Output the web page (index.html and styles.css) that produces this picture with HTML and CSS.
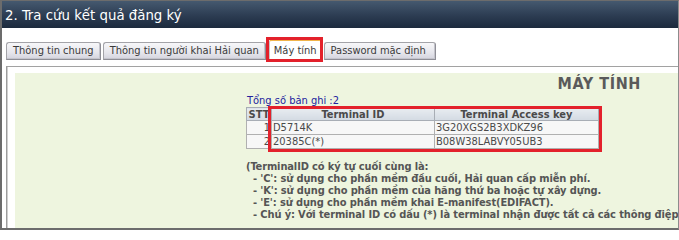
FILE: index.html
```html
<!DOCTYPE html>
<html lang="vi">
<head>
<meta charset="utf-8">
<title>Tra cứu kết quả đăng ký</title>
<link rel="stylesheet" href="styles.css">
</head>
<body>
<div class="window">
  <div class="titlebar">2. Tra cứu kết quả đăng ký</div>
  <div class="body">
    <div class="tabs">
      <div class="tab">Thông tin chung</div>
      <div class="tab">Thông tin người khai Hải quan</div>
      <div class="tab active">Máy tính</div>
      <div class="tab wide">Password mặc định</div>
    </div>
    <div class="panel">
      <div class="content">
        <div class="title">MÁY TÍNH</div>
        <div class="main">
          <div class="count">Tổng số bản ghi :2</div>
          <div class="table-wrap">
            <table class="grid">
              <thead>
                <tr><th class="c-stt">STT</th><th class="c-id">Terminal ID</th><th class="c-key">Terminal Access key</th></tr>
              </thead>
              <tbody>
                <tr><td class="num">1</td><td>D5714K</td><td>3G20XGS2B3XDKZ96</td></tr>
                <tr><td class="num">2</td><td>20385C(*)</td><td>B08W38LABVY05UB3</td></tr>
              </tbody>
            </table>
            <div class="mark"></div>
          </div>
          <div class="notes">
            <div>(TerminalID có ký tự cuối cùng là:</div>
            <div class="sub">- 'C': sử dụng cho phần mềm đầu cuối, Hải quan cấp miễn phí.</div>
            <div class="sub">- 'K': sử dụng cho phần mềm của hãng thứ ba hoặc tự xây dựng.</div>
            <div class="sub">- 'E': sử dụng cho phần mềm khai E-manifest(EDIFACT).</div>
            <div class="sub">- Chú ý: Với terminal ID có dấu (*) là terminal nhận được tất cả các thông điệp</div>
          </div>
        </div>
      </div>
    </div>
  </div>
</div>
</body>
</html>
```

FILE: styles.css
```css
html, body {
  margin: 0;
  padding: 0;
  background: #ffffff;
  width: 679px;
  height: 230px;
  overflow: hidden;
}

.window {
  box-sizing: border-box;
  width: 679px;
  height: 230px;
  border-top: 1px solid #6c6c6c;
  border-left: 2px solid #6c6c6c;
  border-bottom: 2px solid #6c6c6c;
  border-right: 1px solid #8c8c8c;
  display: flex;
  flex-direction: column;
  font-family: "DejaVu Sans Condensed", "DejaVu Sans", sans-serif;
  font-stretch: condensed;
  overflow: hidden;
}

.titlebar {
  height: 27px;
  line-height: 27px;
  padding-left: 3px;
  font-size: 14.8px;
  color: #ffffff;
  background: linear-gradient(#45596f, #2c3c52 55%, #1c2a3d);
  white-space: nowrap;
}

.body {
  flex: 1;
  display: flex;
  flex-direction: column;
  padding: 11px 0 0 4px;
  min-height: 0;
}

.tabs {
  display: flex;
  align-items: flex-end;
  gap: 2px;
  height: 21px;
}

.tab {
  box-sizing: border-box;
  height: 18px;
  line-height: 16px;
  padding: 0 6px;
  font-size: 11px;
  color: #3a3a3a;
  white-space: nowrap;
  border: 1px solid #a3a3a8;
  border-bottom-color: #8e8e96;
  border-right-color: #8e8e96;
  border-radius: 3px 3px 0 0;
  background: linear-gradient(#f7f7f9, #e6e6ec 60%, #d4d4de);
  box-shadow: inset -1px -1px 0 #c4c4cc;
}

.tab.wide {
  padding: 0 9px 0 6px;
}

.tab.active {
  position: relative;
  height: 21px;
  line-height: 19px;
  padding: 0 4px;
  margin: 0 0 0 1px;
  background: #ffffff;
  border-color: #c8c8c8;
  border-top: 2px solid #f0b44a;
  box-shadow: none;
}

.tab.active::after {
  content: "";
  position: absolute;
  top: -4px;
  left: -4px;
  right: -2px;
  bottom: -3px;
  border: 3px solid #e3212b;
}

.panel {
  flex: 1;
  display: flex;
  margin-top: 6px;
  padding: 6px 0 0 8px;
  border-top: 1px solid #a2a2a2;
  border-left: 1px solid #9c9c9c;
  box-shadow: inset 1px 0 0 #cfcfcf;
  min-height: 0;
}

.content {
  flex: 1;
  background: #eef5df;
  display: flex;
  flex-direction: column;
  overflow: hidden;
  min-width: 0;
}

.title {
  margin-top: 2px;
  padding-right: 37px;
  text-align: right;
  font-size: 16px;
  line-height: 18px;
  letter-spacing: 0.6px;
  font-weight: bold;
  color: #5a5a5a;
}

.main {
  padding-left: 231px;
  display: flex;
  flex-direction: column;
  align-items: flex-start;
}

.count {
  margin-top: 1px;
  padding-left: 1px;
  font-size: 11px;
  line-height: 13px;
  color: #23239e;
  white-space: nowrap;
}

.table-wrap {
  position: relative;
}

.grid {
  border-collapse: collapse;
  width: 353px;
  font-size: 11px;
  color: #4a4a4a;
  background: #f7f7f7;
  border: 1px solid #a4a4a4;
}

.grid th {
  height: 12px;
  line-height: 11px;
  padding: 0 1px;
  font-weight: bold;
  color: #4a4a4a;
  background: linear-gradient(#e8ecf0, #d3dae3);
  border: 1px solid #a8adb5;
  text-align: center;
}

.grid td {
  height: 13px;
  line-height: 12px;
  padding: 0 1px;
  border: 1px solid #b0b0b0;
  white-space: nowrap;
}

.grid td.num {
  text-align: right;
}

.c-stt { width: 22px; }
.c-id { width: 160px; }

.mark {
  position: absolute;
  left: 22px;
  top: -1px;
  width: 328px;
  height: 40px;
  border: 3px solid #e3212b;
}

.notes {
  margin-top: 12px;
  font-size: 11px;
  line-height: 12px;
  font-weight: bold;
  letter-spacing: -0.12px;
  color: #555555;
  white-space: nowrap;
}

.notes .sub {
  padding-left: 7px;
}
```
